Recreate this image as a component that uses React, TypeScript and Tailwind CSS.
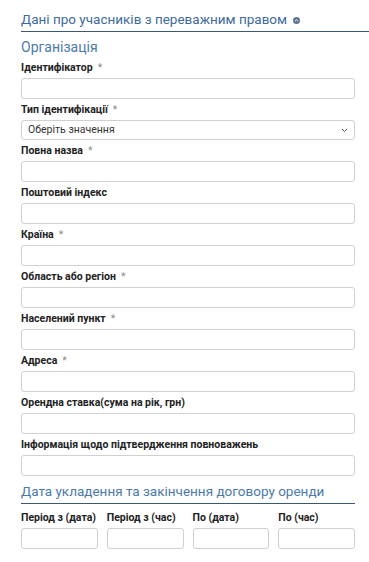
import React from "react";

const font = { fontFamily: 'Roboto, "Noto Sans", sans-serif' };

function Label({ text, req }: { text: string; req?: boolean }) {
  return (
    <div className="h-[21px] flex items-center text-[10.5px] font-bold text-[#222]">
      <span>{text}</span>
      {req && <span className="ml-[5px] font-normal text-[#8a8a8a]">*</span>}
    </div>
  );
}

function Input({ className = "" }: { className?: string }) {
  return <div className={"h-[21px] rounded-[3px] border border-[#d0d0d0] bg-white " + className} />;
}

function Field({ text, req }: { text: string; req?: boolean }) {
  return (
    <div>
      <Label text={text} req={req} />
      <Input />
    </div>
  );
}

export default function App() {
  return (
    <div className="w-[369px] h-[562px] bg-white overflow-hidden" style={font}>
      <div className="pl-[21px] pt-[10px]">
        <div className="flex items-center border-b-[1.5px] border-[#3b5878] pb-[2px] h-[19px] box-content">
          <span className="text-[13.5px] text-[#3e6b9b] leading-none">Дані про учасників з переважним правом</span>
          <svg width="7" height="7" viewBox="0 0 8 8" className="ml-[6px] mt-[2px]">
            <circle cx="4" cy="4" r="4" fill="#5c7692" />
            <path d="M2.2 4.8 L4 3.2 L5.8 4.8" stroke="#fff" strokeWidth="1.1" fill="none" />
          </svg>
        </div>
        <div className="pr-[14px]">
          <div className="mt-[5px] text-[14px] text-[#4b7aab] leading-[20px]">Організація</div>
          <Field text="Ідентифікатор" req />
          <Label text="Тип ідентифікації" req />
          <div className="h-[20px] rounded-[3px] border border-[#d0d0d0] bg-white flex items-center justify-between pl-[6px] pr-[6px]">
            <span className="text-[10.5px] text-[#333]">Оберіть значення</span>
            <svg width="7" height="5" viewBox="0 0 7 5">
              <path d="M1 1 L3.5 3.5 L6 1" stroke="#555" strokeWidth="1" fill="none" />
            </svg>
          </div>
          <Field text="Повна назва" req />
          <Field text="Поштовий індекс" />
          <Field text="Країна" req />
          <Field text="Область або регіон" req />
          <Field text="Населений пункт" req />
          <Field text="Адреса" req />
          <Field text="Орендна ставка(сума на рік, грн)" />
          <Field text="Інформація щодо підтвердження повноважень" />
          <div className="mt-[5px] text-[13.5px] text-[#4b7aab] leading-[20px] border-b-[1.5px] border-[#3b5878] pb-[2px] whitespace-nowrap">
            Дата укладення та закінчення договору оренди
          </div>
          <div className="grid grid-cols-4 gap-x-[9px] mt-[3px]">
            {["Період з (дата)", "Період з (час)", "По (дата)", "По (час)"].map((t) => (
              <div key={t}>
                <Label text={t} />
                <Input />
              </div>
            ))}
          </div>
        </div>
      </div>
    </div>
  );
}
